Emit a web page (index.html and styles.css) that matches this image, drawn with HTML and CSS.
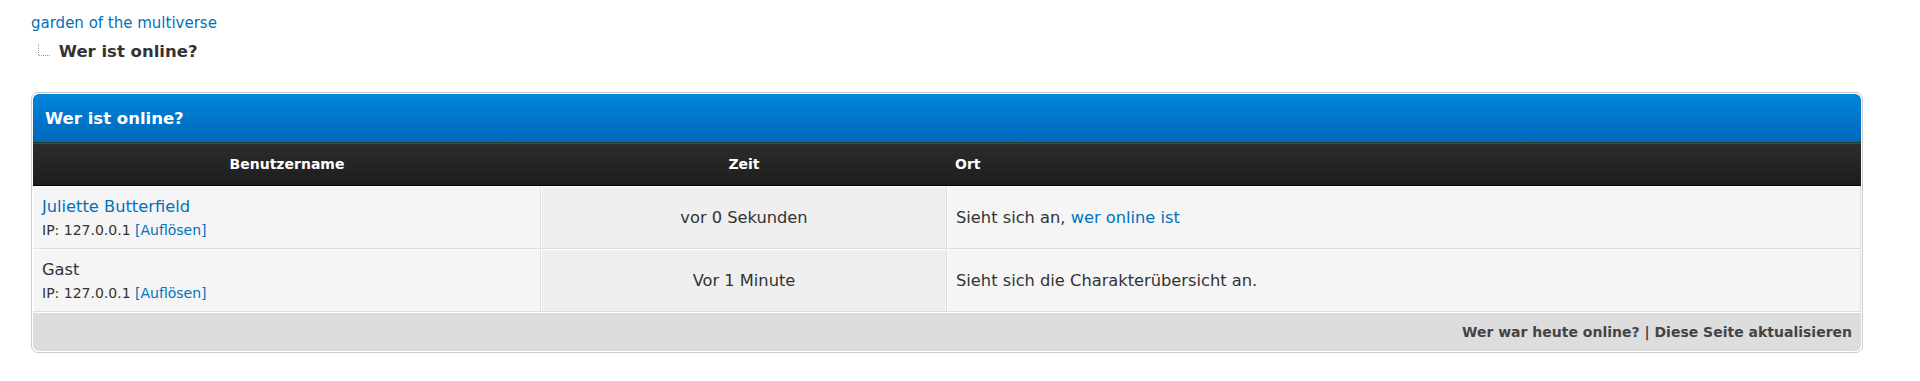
FILE: index.html
```html
<!DOCTYPE html>
<html lang="de">
<head>
  <meta charset="UTF-8" />
  <title>garden of the multiverse - Wer ist online?</title>
  <link rel="stylesheet" href="styles.css">
</head>
<body>
  <div id="container">
    <div class="wrapper">
      <div class="navigation">
        <a href="#">garden of the multiverse</a>
        <div class="nav-current">
          <svg class="nav-sep" width="13" height="12" viewBox="0 0 13 12">
            <path d="M0.5 0 V11.5 H13" fill="none" stroke="#9a9a9a" stroke-width="1" stroke-dasharray="1 1" />
          </svg>
          <span class="active">Wer ist online?</span>
        </div>
      </div>

      <table class="tborder">
        <colgroup>
          <col class="col-user">
          <col class="col-time">
          <col>
        </colgroup>
        <tr>
          <td class="thead" colspan="3"><strong>Wer ist online?</strong></td>
        </tr>
        <tr>
          <td class="tcat center"><strong>Benutzername</strong></td>
          <td class="tcat center"><strong>Zeit</strong></td>
          <td class="tcat"><strong>Ort</strong></td>
        </tr>
        <tr>
          <td class="trow1">
            <div class="user"><a href="#">Juliette Butterfield</a></div>
            <div class="smalltext">IP: 127.0.0.1 <a href="#">[Auflösen]</a></div>
          </td>
          <td class="trow2 center">vor 0 Sekunden</td>
          <td class="trow1">Sieht sich an, <a href="#">wer online ist</a></td>
        </tr>
        <tr>
          <td class="trow1">
            <div class="user">Gast</div>
            <div class="smalltext">IP: 127.0.0.1 <a href="#">[Auflösen]</a></div>
          </td>
          <td class="trow2 center">Vor 1 Minute</td>
          <td class="trow1">Sieht sich die Charakterübersicht an.</td>
        </tr>
        <tr>
          <td class="tfoot" colspan="3">
            <strong><a href="#">Wer war heute online?</a> | <a href="#">Diese Seite aktualisieren</a></strong>
          </td>
        </tr>
      </table>
    </div>
  </div>
</body>
</html>
```

FILE: styles.css
```css
body {
  background: #fff;
  color: #333;
  margin: 0;
  font-family: "DejaVu Sans", sans-serif;
  font-size: 16.25px;
  line-height: 1.4;
}

a {
  color: #0072bc;
  text-decoration: none;
}

.wrapper {
  margin-left: 31px;
  width: 1832px;
  padding-top: 12px;
}

.navigation {
  font-size: 15px;
  line-height: 22px;
  margin-bottom: 29px;
}

.nav-current {
  margin-top: 7px;
}

.navigation .nav-sep {
  margin-left: 7px;
  vertical-align: 1px;
}

.navigation .active {
  font-size: 16.5px;
  font-weight: bold;
  margin-left: 3px;
}

.tborder {
  width: 1832px;
  border: 1px solid #ccc;
  padding: 1px;
  border-spacing: 0;
  border-radius: 7px;
  table-layout: fixed;
  background: #fff;
}

.col-user { width: 508px; }
.col-time { width: 406px; }

.tborder td {
  padding: 0 7px;
}

.thead {
  background: linear-gradient(#0084dc, #0068bb);
  color: #fff;
  border-bottom: 1px solid #263c30;
  border-radius: 6px 6px 0 0;
  font-size: 16.5px;
  line-height: 23px;
  padding: 13px 12px 12px !important;
}

.tcat {
  background: linear-gradient(#2c2c2c, #1d1d1d);
  color: #fff;
  border-top: 1px solid #444;
  border-bottom: 1px solid #000;
  font-size: 14px;
  line-height: 21px;
  padding: 10px 8px !important;
}

.smalltext {
  font-size: 14px;
  line-height: 22px;
}

.trow1,
.trow2 {
  border: 1px solid;
  border-color: #fff #ddd #ddd #fff;
  padding: 8px 8px 7px !important;
}

.trow1 { background: #f5f5f5; }
.trow2 { background: #efefef; }

.user {
  line-height: 24px;
}

.center {
  text-align: center;
}

.tfoot {
  background: #ddd;
  color: #444;
  border-top: 1px solid #fff;
  text-align: right;
  font-size: 14px;
  line-height: 21px;
  padding: 9px 9px 8px !important;
  border-radius: 0 0 6px 6px;
}

.tfoot a {
  color: #444;
}
```
